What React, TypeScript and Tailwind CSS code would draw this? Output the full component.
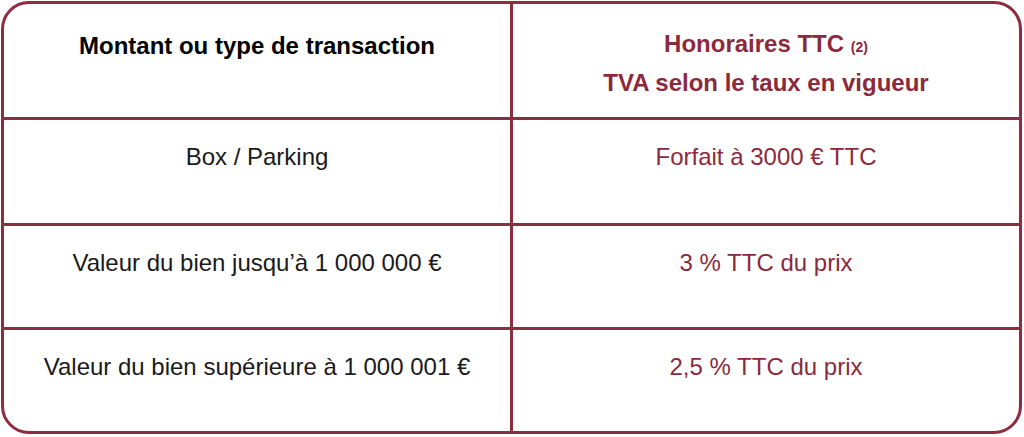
const rows = [
  { label: "Box / Parking", value: "Forfait à 3000 € TTC", h: "h-[106px]" },
  { label: "Valeur du bien jusqu’à 1 000 000 €", value: "3 % TTC du prix", h: "h-[104px]" },
  { label: "Valeur du bien supérieure à 1 000 001 €", value: "2,5 % TTC du prix", h: "flex-1" },
];

export default function App() {
  return (
    <div className="w-[1024px] h-[437px] bg-white pl-[1px] pt-[1px] font-['Liberation_Sans',Arial,sans-serif]">
      <div className="flex h-[433px] w-[1021px] flex-col overflow-hidden rounded-[28px] border-[3px] border-[#8e2c40]">
        <div className="grid h-[116px] grid-cols-[509px_1fr] border-b-[3px] border-[#8e2c40]">
          <div className="border-r-[3px] border-[#8e2c40] pt-[24px] text-center text-[24px] font-bold leading-[36px] text-black">
            Montant ou type de transaction
          </div>
          <div className="pt-[22px] text-center text-[24px] font-bold leading-[36px] text-[#8b2a3c]">
            <div>
              Honoraires TTC <span className="text-[14px]">(2)</span>
            </div>
            <div>TVA selon le taux en vigueur</div>
          </div>
        </div>
        {rows.map((row, i) => (
          <div
            key={row.label}
            className={`grid grid-cols-[509px_1fr] ${row.h} ${
              i < rows.length - 1 ? "border-b-[3px] border-[#8e2c40]" : ""
            }`}
          >
            <div className="border-r-[3px] border-[#8e2c40] pt-[19px] text-center text-[24px] leading-[36px] text-[#1a1a1a]">
              {row.label}
            </div>
            <div className="pt-[19px] text-center text-[24px] leading-[36px] text-[#8b2a3c]">
              {row.value}
            </div>
          </div>
        ))}
      </div>
    </div>
  );
}
